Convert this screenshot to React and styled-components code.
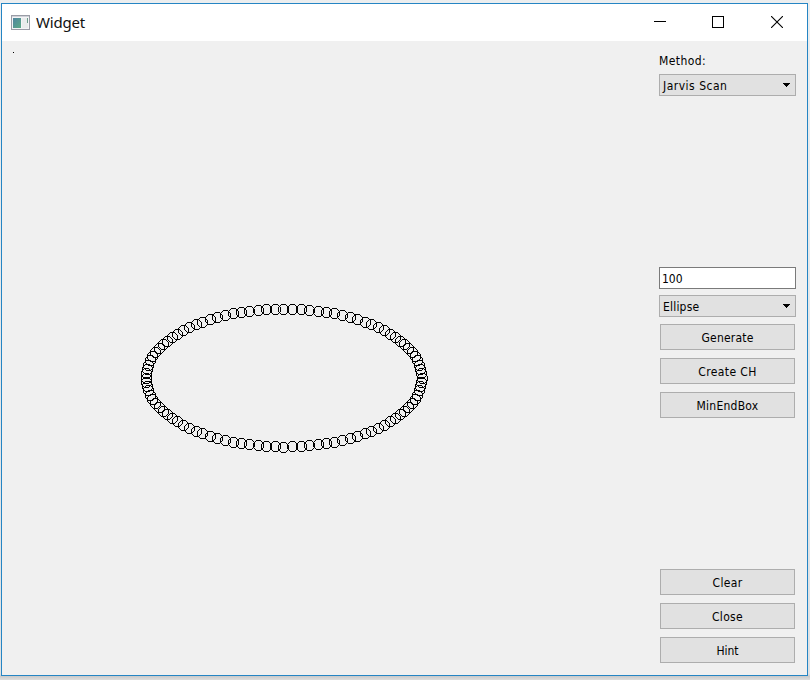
import React from "react";
import styled, { createGlobalStyle } from "styled-components";

const GlobalStyle = createGlobalStyle`
  html, body { margin: 0; padding: 0; background: #e6e7e8; overflow: hidden; }
  *, *::before, *::after { box-sizing: border-box; }
`;

const Desktop = styled.div`
  width: 810px;
  height: 680px;
  padding: 3px 2px 4px 1px;
  background: linear-gradient(#eceeef 0, #dfe1e3 674px, #c9c9c9 676px, #dedede 680px);
`;

const Window = styled.div`
  width: 807px;
  height: 673px;
  display: flex;
  flex-direction: column;
  border: 1px solid #2585c4;
  background: #f0f0f0;
`;

const TitleBar = styled.header`
  height: 37px;
  flex: none;
  display: flex;
  align-items: center;
  padding-left: 9px;
  background: #fff;
`;

const Title = styled.h1`
  flex: 1;
  margin: -2px 0 0 6px;
  font: 400 15px/20px "Noto Sans", sans-serif;
  letter-spacing: -0.2px;
  color: #111;
`;

const CaptionButton = styled.button`
  width: ${(p) => p.$width}px;
  height: 36px;
  padding: 0 0 2px;
  border: 0;
  background: none;
  display: flex;
  align-items: center;
  justify-content: center;
`;

const Content = styled.main`
  flex: 1;
  display: flex;
`;

const Canvas = styled.svg`
  width: 650px;
  height: 634px;
  flex: none;
`;

const Sidebar = styled.aside`
  width: 137px;
  margin-left: 7px;
  padding: 12px 0;
  display: flex;
  flex-direction: column;
  font: 12px/16px "DejaVu Sans Condensed", "DejaVu Sans", sans-serif;
  font-stretch: condensed;
  color: #000;
`;

const Group = styled.section`
  display: flex;
  flex-direction: column;
  margin-top: ${(p) => p.$top || 0}px;
`;

const Label = styled.label`
  height: 16px;
  margin-bottom: 5px;
  letter-spacing: ${(p) => p.$spacing || 0}px;
`;

const Combo = styled.button`
  width: 137px;
  height: 22px;
  padding: 1px 4px 0 3px;
  display: flex;
  align-items: center;
  justify-content: space-between;
  border: 1px solid #adadad;
  background: #e1e1e1;
  color: inherit;
  font: inherit;
  font-stretch: condensed;
  letter-spacing: ${(p) => p.$spacing || 0}px;
`;

const CountInput = styled.input`
  width: 137px;
  height: 22px;
  margin: 0 0 6px;
  padding: 1px 2px 0;
  border: 1px solid #7a7a7a;
  border-radius: 0;
  background: #fff;
  color: inherit;
  font: inherit;
  font-stretch: condensed;
`;

const ButtonStack = styled.div`
  display: flex;
  flex-direction: column;
  gap: 8px;
  margin: ${(p) => p.$top || 0}px 1px 0;
`;

const PushButton = styled.button`
  height: 26px;
  padding: 1px 0 0;
  border: 1px solid #adadad;
  background: #e1e1e1;
  color: inherit;
  font: inherit;
  font-stretch: condensed;
  letter-spacing: ${(p) => p.$spacing || 0}px;
`;

const POINT_COUNT = 100;
const points = Array.from({ length: POINT_COUNT }, (_, i) => {
  const t = (2 * Math.PI * i) / POINT_COUNT;
  const onVerticalAxis = i % 50 === 25;
  return {
    x: onVerticalAxis ? 281 : Math.floor(282 + 138 * Math.cos(t)),
    y: Math.floor(337 + 69 * Math.sin(t) + 1e-6),
  };
});

// One-pixel ring, 11 pixels across, centred on the origin pixel.
const RING =
  "M-2 -5h5v1h-5z M-2 5h5v1h-5z M-5 -2h1v5h-1z M5 -2h1v5h-1z" +
  "M-3 -4h1v1h-1z M3 -4h1v1h-1z M-4 -3h1v1h-1z M4 -3h1v1h-1z" +
  "M-3 4h1v1h-1z M3 4h1v1h-1z M-4 3h1v1h-1z M4 3h1v1h-1z";

const AppIcon = () => (
  <svg width="19" height="15" viewBox="0 0 19 15" shapeRendering="crispEdges">
    <defs>
      <linearGradient id="screen" x1="0" y1="0" x2="1" y2="1">
        <stop offset="0" stopColor="#4f85a0" />
        <stop offset="1" stopColor="#5caa86" />
      </linearGradient>
    </defs>
    <rect x="0.5" y="0.5" width="18" height="14" fill="#f4f4f6" stroke="#9a9ca6" />
    <rect x="1" y="1" width="17" height="1" fill="#cfd2d8" />
    <rect x="2" y="3" width="8" height="10" fill="url(#screen)" />
    <rect x="11" y="3" width="6" height="10" fill="#e9ecec" />
    <rect x="16" y="3" width="1" height="5" fill="#6c9c8b" />
  </svg>
);

const Arrow = () => (
  <svg width="9" height="5" viewBox="0 0 9 5" shapeRendering="crispEdges">
    <path d="M1 0h7v1h-1v1h-1v1h-1v1h-1v-1h-1v-1h-1v-1h-1z" fill="#000" />
  </svg>
);

export default function App() {
  return (
    <>
      <GlobalStyle />
      <Desktop>
        <Window>
          <TitleBar>
            <AppIcon />
            <Title>Widget</Title>
            <CaptionButton $width={58} aria-label="Minimize">
              <svg width="12" height="12" shapeRendering="crispEdges">
                <path d="M0 5.5h12" stroke="#000" />
              </svg>
            </CaptionButton>
            <CaptionButton $width={58} aria-label="Maximize">
              <svg width="12" height="12" shapeRendering="crispEdges">
                <rect x="0.5" y="0.5" width="11" height="11" fill="none" stroke="#000" />
              </svg>
            </CaptionButton>
            <CaptionButton $width={60} aria-label="Close window">
              <svg width="12" height="12">
                <path d="M0 0L12 12M12 0L0 12" stroke="#000" strokeWidth="1.1" />
              </svg>
            </CaptionButton>
          </TitleBar>
          <Content>
            <Canvas>
              <rect x="11" y="11" width="1" height="1" fill="#000" />
              {points.map((p, i) => (
                <path
                  key={i}
                  d={RING}
                  transform={`translate(${p.x} ${p.y})`}
                  fill="#000"
                  shapeRendering="crispEdges"
                />
              ))}
            </Canvas>
            <Sidebar>
              <Group>
                <Label $spacing={0.4}>Method:</Label>
                <Combo $spacing={0.5}>
                  Jarvis Scan
                  <Arrow />
                </Combo>
              </Group>
              <Group $top={171}>
                <CountInput defaultValue="100" aria-label="Point count" />
                <Combo $spacing={0.2}>
                  Ellipse
                  <Arrow />
                </Combo>
                <ButtonStack $top={7}>
                  <PushButton $spacing={0.2}>Generate</PushButton>
                  <PushButton $spacing={0.4}>Create CH</PushButton>
                  <PushButton $spacing={0.25}>MinEndBox</PushButton>
                </ButtonStack>
              </Group>
              <ButtonStack $top={151}>
                <PushButton $spacing={0.35}>Clear</PushButton>
                <PushButton $spacing={0.3}>Close</PushButton>
                <PushButton>Hint</PushButton>
              </ButtonStack>
            </Sidebar>
          </Content>
        </Window>
      </Desktop>
    </>
  );
}
